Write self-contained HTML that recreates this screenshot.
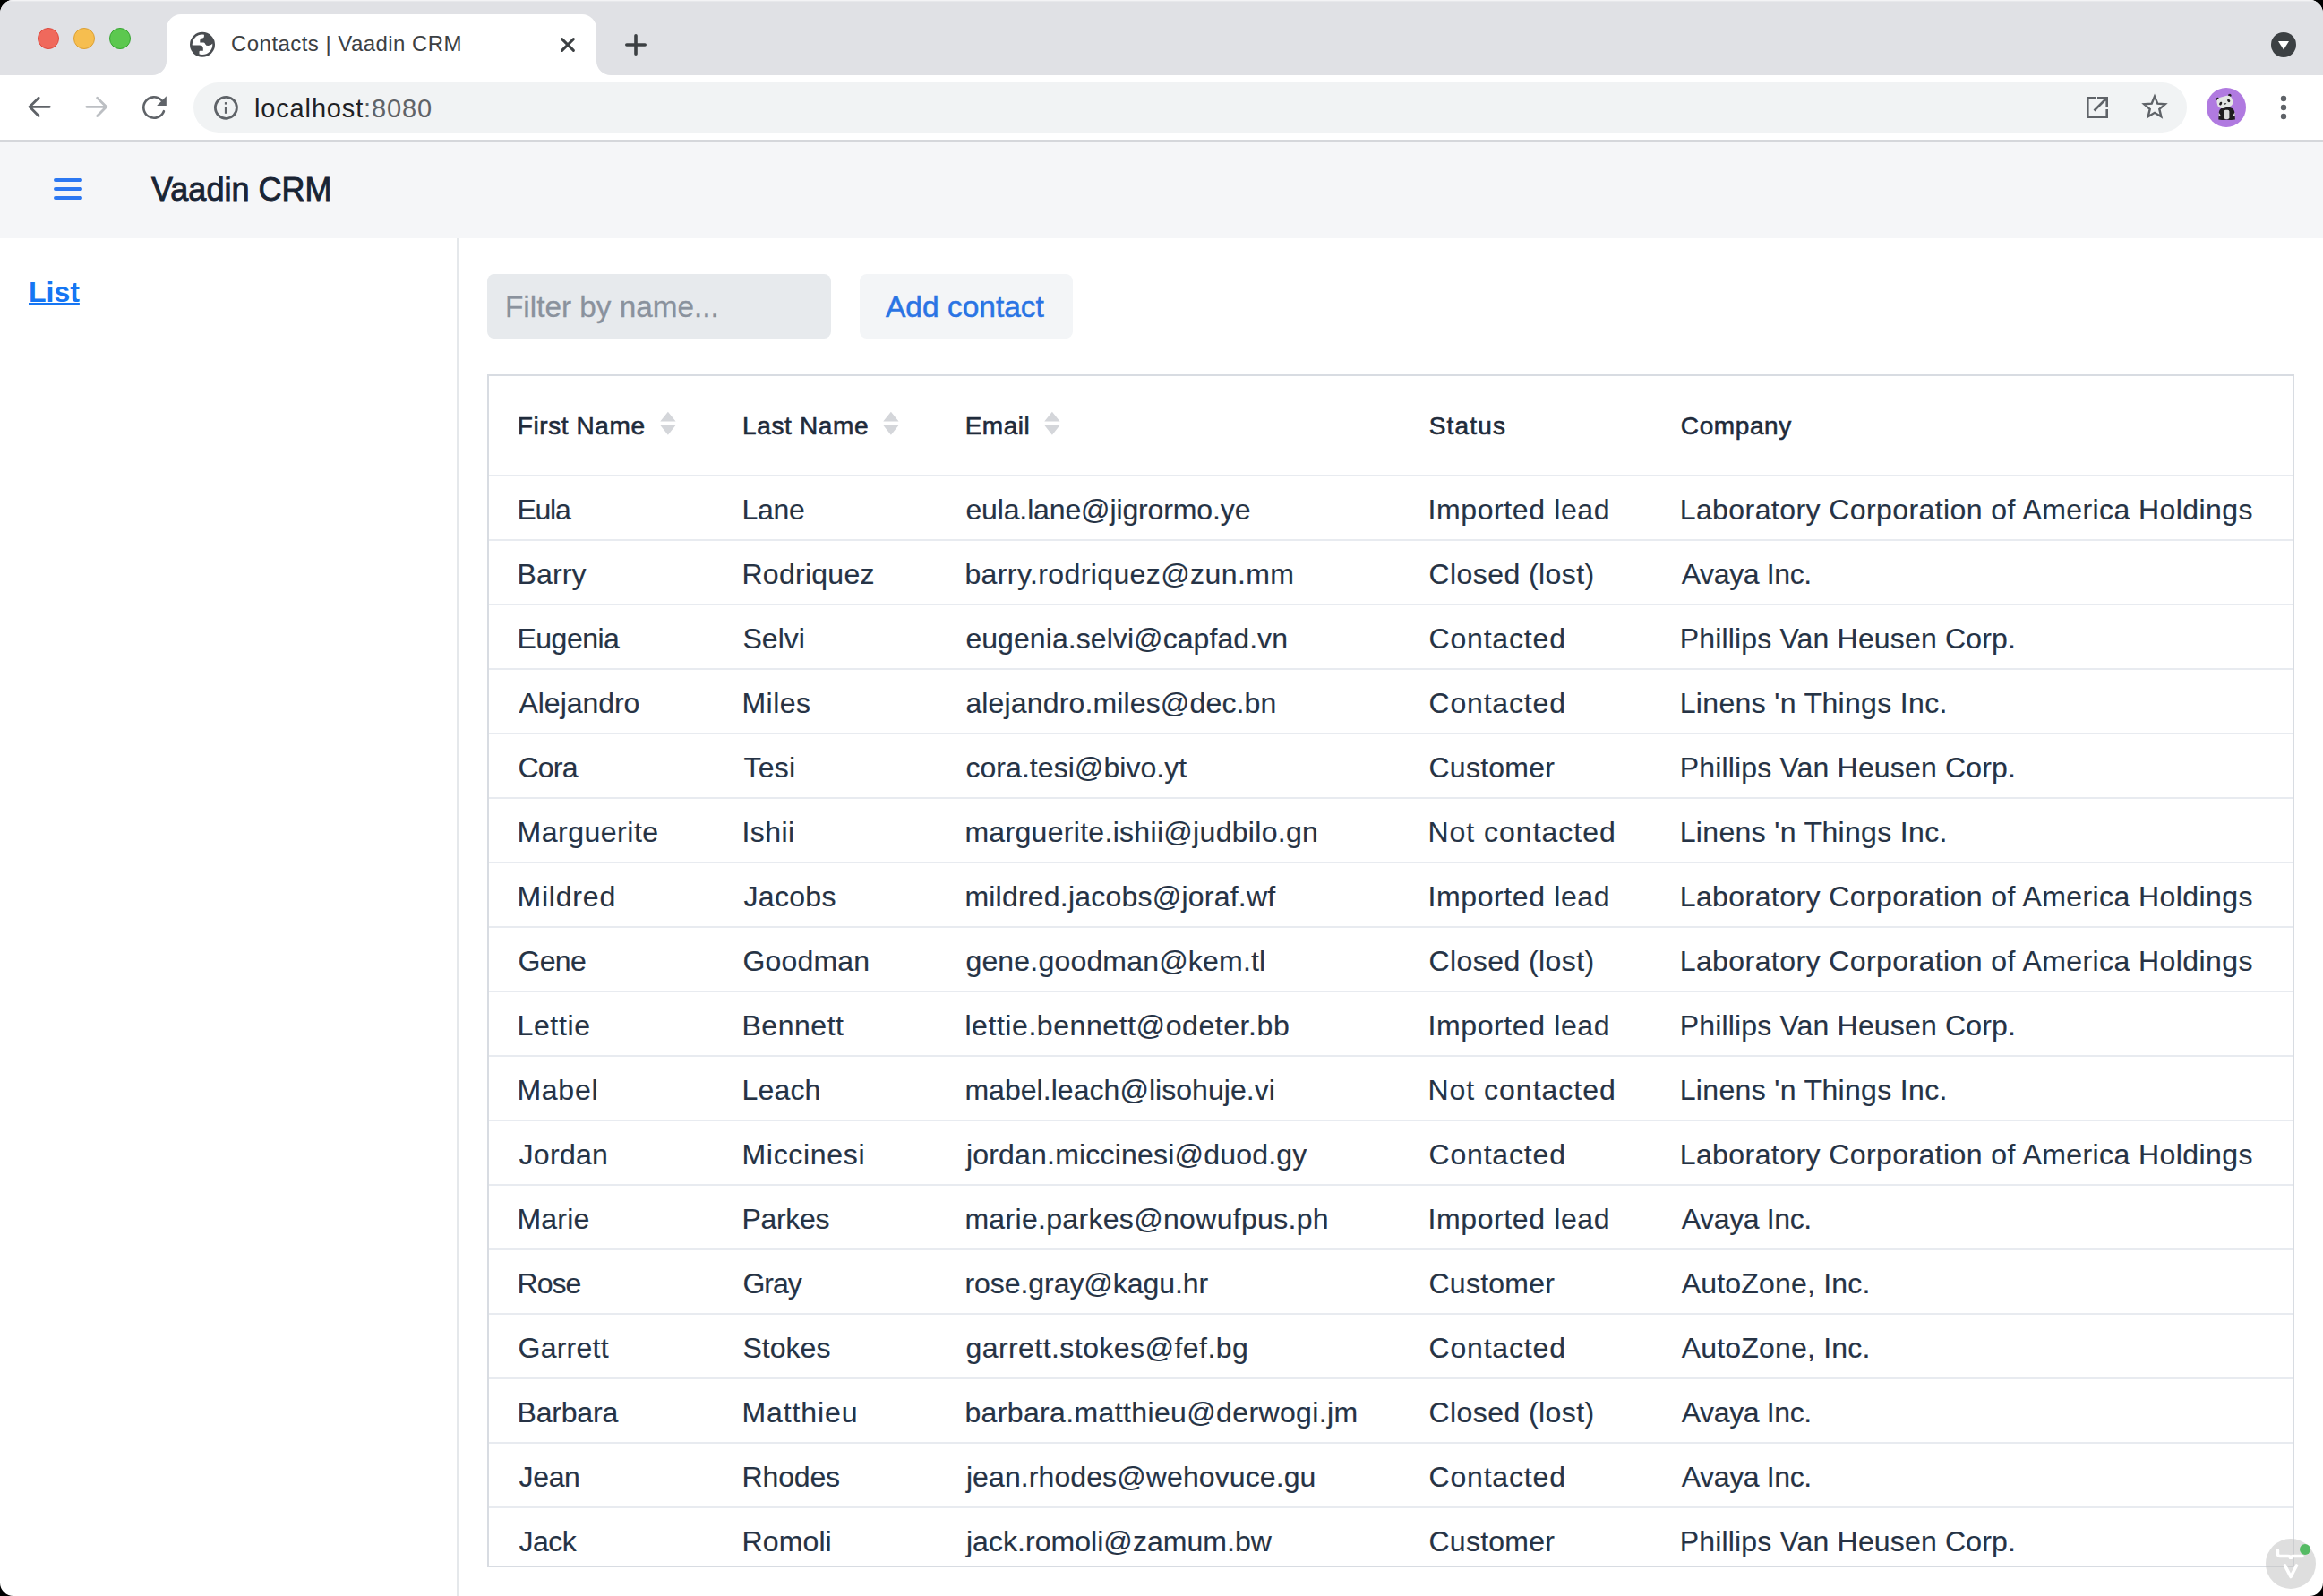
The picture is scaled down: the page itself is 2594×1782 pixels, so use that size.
<!DOCTYPE html>
<html><head><meta charset="utf-8">
<style>
html,body{margin:0;padding:0;width:2594px;height:1782px;overflow:hidden;background:#000;}
*{box-sizing:border-box;}
body{font-family:"Liberation Sans",sans-serif;}
.win{position:absolute;left:0;top:0;width:2594px;height:1782px;border-radius:15px;overflow:hidden;background:#fff;}
.abs{position:absolute;}
.tabstrip{left:0;top:0;width:2594px;height:84px;background:#e0e1e5;border-top:1px solid #f3f3f5;box-shadow:inset 0 1px 0 #e7e8eb;}
.tl{width:24px;height:24px;border-radius:50%;top:31px;}
.tab{left:186px;top:16px;width:480px;height:68px;background:#fff;border-radius:16px 16px 0 0;}
.tabcorner{top:64px;width:20px;height:20px;background:#fff;}
.tabcorner i{position:absolute;left:0;top:0;width:20px;height:20px;background:#e0e1e5;}
.tabtitle{left:258px;top:34px;font-size:24px;letter-spacing:0.45px;color:#3c4043;white-space:nowrap;line-height:30px;}
.toolbar{left:0;top:84px;width:2594px;height:72px;background:#fff;}
.tbborder{left:0;top:156px;width:2594px;height:2px;background:#d5d7db;}
.omni{left:216px;top:92px;width:2226px;height:56px;border-radius:28px;background:#f1f3f4;}
.url{left:284px;top:104px;font-size:29px;letter-spacing:0.85px;line-height:34px;color:#202124;white-space:nowrap;}
.appbar{left:0;top:158px;width:2594px;height:108px;background:#f5f6f8;}
.title{left:169px;top:192px;font-size:36px;font-weight:400;-webkit-text-stroke:0.9px #192434;color:#192434;line-height:40px;white-space:nowrap;}
.divider{left:510px;top:266px;width:2px;height:1516px;background:#e5e8eb;}
.list{left:32px;top:306px;font-size:32px;font-weight:700;color:#1676f3;text-decoration:underline;text-decoration-thickness:2.5px;text-underline-offset:1px;line-height:40px;}
.field{left:544px;top:306px;width:384px;height:72px;border-radius:8px;background:#e7eaed;}
.ph{left:564px;top:325px;font-size:33.3px;line-height:36px;color:#8a929d;-webkit-text-stroke:0.3px #8a929d;white-space:nowrap;}
.btn{left:960px;top:306px;width:238px;height:72px;border-radius:8px;background:#f3f5f7;}
.btntxt{left:989px;top:325px;font-size:33.5px;line-height:36px;color:#2a74e4;-webkit-text-stroke:0.5px #2a74e4;white-space:nowrap;}
.grid{left:544px;top:418px;width:2018px;height:1332px;border:2px solid #d8dce2;overflow:hidden;}
.row{position:absolute;left:0;width:2014px;height:72px;border-top:2px solid #e8ebf0;}
.cell{position:absolute;top:19px;font-size:32px;line-height:36px;color:#263345;-webkit-text-stroke:0.15px #263345;white-space:nowrap;}
.hcell{position:absolute;font-size:28px;font-weight:400;-webkit-text-stroke:0.6px #1f2b3b;color:#1f2b3b;white-space:nowrap;line-height:32px;}
.sorter{position:absolute;width:18px;height:27px;}
</style></head><body>
<div class="win">
  <!-- tab strip -->
  <div class="abs tabstrip"></div>
  <div class="abs tl" style="left:42px;background:#f0695c;border:1px solid #de4a3f;"></div>
  <div class="abs tl" style="left:82px;background:#f6be4f;border:1px solid #dca034;"></div>
  <div class="abs tl" style="left:122px;background:#5cc84f;border:1px solid #37a532;"></div>
  <div class="abs tab"></div>
  <div class="abs tabcorner" style="left:166px;"><i style="border-radius:0 0 16px 0;"></i></div>
  <div class="abs tabcorner" style="left:666px;"><i style="border-radius:0 0 0 16px;"></i></div>
  <svg class="abs" style="left:208px;top:32px" width="36" height="36" viewBox="0 0 36 36">
    <defs><clipPath id="gc"><circle cx="18" cy="17.8" r="12.5"/></clipPath></defs>
    <circle cx="18" cy="17.8" r="14" fill="#4a4d51"/><circle cx="18" cy="17.8" r="11.3" fill="#fff"/>
    <g clip-path="url(#gc)" fill="#4a4d51">
      <path d="M19.9 4 L19.9 8.6 Q19.9 10.4 18.2 10.6 L17.2 10.8 Q15.3 11.2 15.3 13 L15.3 15.6 L19.4 15.6 Q20.8 15.6 21.2 17.2 Q21.9 19.1 24.6 19.1 Q27.5 19.1 30 16 L32 4 Z"/>
      <path d="M4 18.6 L14.6 18.6 Q18.8 18.6 18.8 22 L18.8 24.7 L15.4 24.7 Q14.5 24.7 14.5 25.7 L14.5 32 L4 32 Z"/>
    </g>
  </svg>
  <div class="abs tabtitle">Contacts | Vaadin CRM</div>
  <svg class="abs" style="left:624px;top:40px" width="20" height="20" viewBox="0 0 20 20"><path d="M3.6 3.6 L16.4 16.4 M16.4 3.6 L3.6 16.4" stroke="#3c4043" stroke-width="3" stroke-linecap="round"/></svg>
  <svg class="abs" style="left:698px;top:38px" width="24" height="24" viewBox="0 0 24 24"><path d="M12 1.8 V22.2 M1.8 12 H22.2" stroke="#3c4043" stroke-width="3.6" stroke-linecap="round"/></svg>
  <svg class="abs" style="left:2536px;top:36px" width="28" height="28" viewBox="0 0 28 28"><circle cx="14" cy="14" r="14" fill="#3c4043"/><path d="M8 10 H20 L14 19.5Z" fill="#fff"/></svg>

  <!-- toolbar -->
  <div class="abs toolbar"></div>
  <div class="abs tbborder"></div>
  <svg class="abs" style="left:28px;top:104px" width="32" height="32" viewBox="0 0 32 32"><path d="M27.3 15.3 H5.5 M15.2 5.2 L5.1 15.3 L15.2 25.4" stroke="#5f6368" stroke-width="2.8" fill="none" stroke-linecap="round" stroke-linejoin="miter"/></svg>
  <svg class="abs" style="left:92px;top:104px" width="32" height="32" viewBox="0 0 32 32"><path d="M4.8 15.3 H26 M16.6 5.2 L26.7 15.3 L16.6 25.4" stroke="#bcbfc3" stroke-width="2.8" fill="none" stroke-linecap="round" stroke-linejoin="miter"/></svg>
  <svg class="abs" style="left:156px;top:104px" width="32" height="32" viewBox="0 0 32 32"><path d="M24.27 7.73 A11.7 11.7 0 1 0 26.92 20.19" stroke="#5f6368" stroke-width="2.6" fill="none" stroke-linecap="round"/><path d="M29.8 3.2 V13.9 H19.1Z" fill="#5f6368"/></svg>
  <div class="abs omni"></div>
  <svg class="abs" style="left:238px;top:106px" width="29" height="29" viewBox="0 0 29 29"><circle cx="14.4" cy="14.3" r="12" stroke="#5f6368" stroke-width="2.8" fill="none"/><rect x="12.9" y="13.6" width="3" height="7.2" fill="#5f6368"/><rect x="12.9" y="8.1" width="3" height="2.5" fill="#5f6368"/></svg>
  <div class="abs url">localhost<span style="color:#5f6368">:8080</span></div>
  <svg class="abs" style="left:2326px;top:104px" width="32" height="32" viewBox="0 0 32 32"><path d="M14 5.3 H5.3 V26.7 H26.7 V18" stroke="#5f6368" stroke-width="2.6" fill="none"/><path d="M12.5 19.5 L26 6 M16 5.3 H26.7 V16" stroke="#5f6368" stroke-width="2.6" fill="none"/></svg>
  <svg class="abs" style="left:2390px;top:104px" width="32" height="32" viewBox="0 0 32 32"><path d="M16 3.6 L19.3 11.6 L27.8 12.3 L21.3 17.9 L23.3 26.3 L16 21.8 L8.7 26.3 L10.7 17.9 L4.2 12.3 L12.7 11.6Z" stroke="#5f6368" stroke-width="2.4" fill="none" stroke-linejoin="miter"/></svg>
  <svg class="abs" style="left:2464px;top:98px" width="44" height="44" viewBox="0 0 44 44"><circle cx="22" cy="22" r="22" fill="#b07ae0"/>
    <path d="M13.3 35.6 L13.8 27 Q14.5 21.6 22.5 21.4 Q30.5 21.6 31.3 27 L31.9 35.6 Q27 36.3 22.5 35.4 Q17.5 36.3 13.3 35.6Z" fill="#1f1d1f"/>
    <path d="M13.6 27.5 L16 31.5 L13.5 31.8Z M31.5 27.2 L29.3 31.3 L31.8 31.6Z" fill="#e0e0e0"/>
    <rect x="19.4" y="24.8" width="6" height="10.2" rx="1.8" fill="#dcdcdc"/>
    <circle cx="12.6" cy="12.6" r="1.8" fill="#1f1d1f"/><circle cx="25.8" cy="8.6" r="1.8" fill="#1f1d1f"/>
    <rect x="11.6" y="9.6" width="17.6" height="12.6" rx="5" transform="rotate(-14 20.4 15.9)" fill="#e3e5e3"/>
    <ellipse cx="15.7" cy="17.6" rx="1.4" ry="2" transform="rotate(30 15.7 17.6)" fill="#1f1d1f"/>
    <ellipse cx="24.7" cy="14.4" rx="1.4" ry="1.9" transform="rotate(-40 24.7 14.4)" fill="#1f1d1f"/>
    <path d="M19.5 17.6 L22.3 16.9 L20.8 19Z" fill="#1f1d1f"/>
  </svg>
  <svg class="abs" style="left:2544px;top:104px" width="12" height="32" viewBox="0 0 12 32"><circle cx="6" cy="6" r="3.2" fill="#5f6368"/><circle cx="6" cy="16" r="3.2" fill="#5f6368"/><circle cx="6" cy="26" r="3.2" fill="#5f6368"/></svg>

  <!-- app header -->
  <div class="abs appbar"></div>
  <svg class="abs" style="left:58px;top:196px" width="36" height="30" viewBox="0 0 36 30"><path d="M4 5 H32 M4 15 H32 M4 25 H32" stroke="#2c78f2" stroke-width="4" stroke-linecap="round"/></svg>
  <div class="abs title">Vaadin CRM</div>

  <div class="abs divider"></div>
  <div class="abs list">List</div>

  <div class="abs field"></div>
  <div class="abs ph">Filter by name...</div>
  <div class="abs btn"></div>
  <div class="abs btntxt">Add contact</div>

  <div class="abs grid" id="grid">
<div class="hcell" style="left:31.7px;top:40px;letter-spacing:0.60px">First Name</div>
<div class="hcell" style="left:282.9px;top:40px;letter-spacing:0.67px">Last Name</div>
<div class="hcell" style="left:531.7px;top:40px;letter-spacing:0.48px">Email</div>
<div class="hcell" style="left:1049.7px;top:40px;letter-spacing:1.18px">Status</div>
<div class="hcell" style="left:1330.8px;top:40px;letter-spacing:0.61px">Company</div>
<svg class="sorter" style="left:191px;top:39px" width="19" height="29" viewBox="0 0 19 29"><path d="M9.4 0.7 L18.7 12.4 H0.1Z M0.1 16.8 H18.7 L9.4 28.8Z" fill="#d4d6da"/></svg>
<svg class="sorter" style="left:440px;top:39px" width="19" height="29" viewBox="0 0 19 29"><path d="M9.4 0.7 L18.7 12.4 H0.1Z M0.1 16.8 H18.7 L9.4 28.8Z" fill="#d4d6da"/></svg>
<svg class="sorter" style="left:620px;top:39px" width="19" height="29" viewBox="0 0 19 29"><path d="M9.4 0.7 L18.7 12.4 H0.1Z M0.1 16.8 H18.7 L9.4 28.8Z" fill="#d4d6da"/></svg>
<div class="row" style="top:110px"><div class="cell" style="left:31.5px;letter-spacing:-1.28px">Eula</div><div class="cell" style="left:282.5px;letter-spacing:-0.33px">Lane</div><div class="cell" style="left:532.4px;letter-spacing:-0.13px">eula.lane@jigrormo.ye</div><div class="cell" style="left:1048.5px;letter-spacing:0.61px">Imported lead</div><div class="cell" style="left:1329.7px;letter-spacing:0.42px">Laboratory Corporation of America Holdings</div></div>
<div class="row" style="top:182px"><div class="cell" style="left:31.5px;letter-spacing:0.16px">Barry</div><div class="cell" style="left:282.5px;letter-spacing:0.26px">Rodriquez</div><div class="cell" style="left:531.4px;letter-spacing:0.40px">barry.rodriquez@zun.mm</div><div class="cell" style="left:1049.5px;letter-spacing:0.42px">Closed (lost)</div><div class="cell" style="left:1331.7px;letter-spacing:-0.37px">Avaya Inc.</div></div>
<div class="row" style="top:254px"><div class="cell" style="left:31.5px;letter-spacing:-0.51px">Eugenia</div><div class="cell" style="left:283.5px;letter-spacing:0.01px">Selvi</div><div class="cell" style="left:532.4px;letter-spacing:0.07px">eugenia.selvi@capfad.vn</div><div class="cell" style="left:1049.5px;letter-spacing:0.82px">Contacted</div><div class="cell" style="left:1329.7px;letter-spacing:0.17px">Phillips Van Heusen Corp.</div></div>
<div class="row" style="top:326px"><div class="cell" style="left:33.5px;letter-spacing:-0.04px">Alejandro</div><div class="cell" style="left:282.5px;letter-spacing:0.43px">Miles</div><div class="cell" style="left:532.4px;letter-spacing:0.15px">alejandro.miles@dec.bn</div><div class="cell" style="left:1049.5px;letter-spacing:0.82px">Contacted</div><div class="cell" style="left:1329.7px;letter-spacing:0.34px">Linens 'n Things Inc.</div></div>
<div class="row" style="top:398px"><div class="cell" style="left:32.5px;letter-spacing:-0.79px">Cora</div><div class="cell" style="left:284.5px;letter-spacing:0.23px">Tesi</div><div class="cell" style="left:532.4px;letter-spacing:0.06px">cora.tesi@bivo.yt</div><div class="cell" style="left:1049.5px;letter-spacing:0.25px">Customer</div><div class="cell" style="left:1329.7px;letter-spacing:0.17px">Phillips Van Heusen Corp.</div></div>
<div class="row" style="top:470px"><div class="cell" style="left:31.5px;letter-spacing:0.52px">Marguerite</div><div class="cell" style="left:282.5px;letter-spacing:0.43px">Ishii</div><div class="cell" style="left:531.4px;letter-spacing:0.31px">marguerite.ishii@judbilo.gn</div><div class="cell" style="left:1048.5px;letter-spacing:0.98px">Not contacted</div><div class="cell" style="left:1329.7px;letter-spacing:0.34px">Linens 'n Things Inc.</div></div>
<div class="row" style="top:542px"><div class="cell" style="left:31.5px;letter-spacing:0.80px">Mildred</div><div class="cell" style="left:284.5px;letter-spacing:0.32px">Jacobs</div><div class="cell" style="left:531.4px;letter-spacing:0.22px">mildred.jacobs@joraf.wf</div><div class="cell" style="left:1048.5px;letter-spacing:0.61px">Imported lead</div><div class="cell" style="left:1329.7px;letter-spacing:0.42px">Laboratory Corporation of America Holdings</div></div>
<div class="row" style="top:614px"><div class="cell" style="left:32.5px;letter-spacing:-0.69px">Gene</div><div class="cell" style="left:283.5px;letter-spacing:0.18px">Goodman</div><div class="cell" style="left:532.4px;letter-spacing:0.19px">gene.goodman@kem.tl</div><div class="cell" style="left:1049.5px;letter-spacing:0.42px">Closed (lost)</div><div class="cell" style="left:1329.7px;letter-spacing:0.42px">Laboratory Corporation of America Holdings</div></div>
<div class="row" style="top:686px"><div class="cell" style="left:31.5px;letter-spacing:0.64px">Lettie</div><div class="cell" style="left:282.5px;letter-spacing:0.53px">Bennett</div><div class="cell" style="left:531.4px;letter-spacing:0.57px">lettie.bennett@odeter.bb</div><div class="cell" style="left:1048.5px;letter-spacing:0.61px">Imported lead</div><div class="cell" style="left:1329.7px;letter-spacing:0.17px">Phillips Van Heusen Corp.</div></div>
<div class="row" style="top:758px"><div class="cell" style="left:31.5px;letter-spacing:0.71px">Mabel</div><div class="cell" style="left:282.5px;letter-spacing:0.18px">Leach</div><div class="cell" style="left:531.4px;letter-spacing:0.04px">mabel.leach@lisohuje.vi</div><div class="cell" style="left:1048.5px;letter-spacing:0.98px">Not contacted</div><div class="cell" style="left:1329.7px;letter-spacing:0.34px">Linens 'n Things Inc.</div></div>
<div class="row" style="top:830px"><div class="cell" style="left:33.5px;letter-spacing:0.31px">Jordan</div><div class="cell" style="left:282.5px;letter-spacing:0.70px">Miccinesi</div><div class="cell" style="left:532.9px;letter-spacing:0.20px">jordan.miccinesi@duod.gy</div><div class="cell" style="left:1049.5px;letter-spacing:0.82px">Contacted</div><div class="cell" style="left:1329.7px;letter-spacing:0.42px">Laboratory Corporation of America Holdings</div></div>
<div class="row" style="top:902px"><div class="cell" style="left:31.5px;letter-spacing:0.20px">Marie</div><div class="cell" style="left:282.5px;letter-spacing:-0.34px">Parkes</div><div class="cell" style="left:531.4px;letter-spacing:0.32px">marie.parkes@nowufpus.ph</div><div class="cell" style="left:1048.5px;letter-spacing:0.61px">Imported lead</div><div class="cell" style="left:1331.7px;letter-spacing:-0.37px">Avaya Inc.</div></div>
<div class="row" style="top:974px"><div class="cell" style="left:31.5px;letter-spacing:-0.94px">Rose</div><div class="cell" style="left:283.5px;letter-spacing:-1.05px">Gray</div><div class="cell" style="left:531.4px;letter-spacing:-0.05px">rose.gray@kagu.hr</div><div class="cell" style="left:1049.5px;letter-spacing:0.25px">Customer</div><div class="cell" style="left:1331.7px;letter-spacing:0.19px">AutoZone, Inc.</div></div>
<div class="row" style="top:1046px"><div class="cell" style="left:32.5px;letter-spacing:0.24px">Garrett</div><div class="cell" style="left:283.5px;letter-spacing:0.01px">Stokes</div><div class="cell" style="left:532.4px;letter-spacing:0.45px">garrett.stokes@fef.bg</div><div class="cell" style="left:1049.5px;letter-spacing:0.82px">Contacted</div><div class="cell" style="left:1331.7px;letter-spacing:0.19px">AutoZone, Inc.</div></div>
<div class="row" style="top:1118px"><div class="cell" style="left:31.5px;letter-spacing:-0.19px">Barbara</div><div class="cell" style="left:282.5px;letter-spacing:0.89px">Matthieu</div><div class="cell" style="left:531.4px;letter-spacing:0.37px">barbara.matthieu@derwogi.jm</div><div class="cell" style="left:1049.5px;letter-spacing:0.42px">Closed (lost)</div><div class="cell" style="left:1331.7px;letter-spacing:-0.37px">Avaya Inc.</div></div>
<div class="row" style="top:1190px"><div class="cell" style="left:33.5px;letter-spacing:-0.33px">Jean</div><div class="cell" style="left:282.5px;letter-spacing:-0.14px">Rhodes</div><div class="cell" style="left:532.9px;letter-spacing:0.10px">jean.rhodes@wehovuce.gu</div><div class="cell" style="left:1049.5px;letter-spacing:0.82px">Contacted</div><div class="cell" style="left:1331.7px;letter-spacing:-0.37px">Avaya Inc.</div></div>
<div class="row" style="top:1262px"><div class="cell" style="left:33.5px;letter-spacing:-0.53px">Jack</div><div class="cell" style="left:282.5px;letter-spacing:0.13px">Romoli</div><div class="cell" style="left:532.9px;letter-spacing:0.05px">jack.romoli@zamum.bw</div><div class="cell" style="left:1049.5px;letter-spacing:0.25px">Customer</div><div class="cell" style="left:1329.7px;letter-spacing:0.17px">Phillips Van Heusen Corp.</div></div>
  </div>
  <svg class="abs" style="left:2522px;top:1710px" width="72" height="72" viewBox="0 0 72 72">
    <circle cx="36" cy="36" r="28" fill="rgba(190,190,190,0.5)"/>
    <path d="M21.5 21 V25 Q21.5 27.5 24 27.5 H33 Q36 27.5 36 31 Q36 27.5 39 27.5 H49" stroke="#fff" stroke-width="3.4" fill="none" stroke-linecap="round"/>
    <path d="M29.5 38 L36 50.5 L42.5 38" stroke="#fff" stroke-width="3.6" fill="none" stroke-linecap="round" stroke-linejoin="round"/>
    <circle cx="52" cy="20" r="6" fill="#55bb64"/>
  </svg>
</div>
</body></html>
